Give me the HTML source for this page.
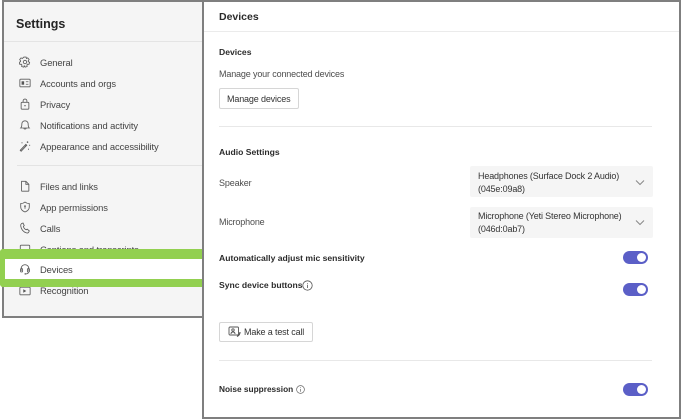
<!DOCTYPE html>
<html><head><meta charset="utf-8">
<style>
html,body{margin:0;padding:0;background:#fff}
body{width:681px;height:419px;position:relative;overflow:hidden;font-family:"Liberation Sans",sans-serif;color:#333}
#w{position:absolute;left:0;top:0;width:681px;height:419px;filter:blur(.3px)}
.a{position:absolute}
.t{position:absolute;white-space:nowrap;font-size:9px;letter-spacing:-.15px;line-height:12px;color:#424242}
.b{font-weight:bold;color:#2b2b2b;font-size:8.6px;letter-spacing:0}
.nav{left:40px;color:#444;font-size:9.4px;letter-spacing:-.1px}
svg.i{position:absolute;left:19px;width:12px;height:12px;margin-top:1px;fill:none;stroke:#5c5c5c;stroke-width:1}
.tog{position:absolute;left:623px;width:25px;height:13px;border-radius:7px;background:#5b5fc7}
.tog:after{content:"";position:absolute;right:2px;top:2px;width:9px;height:9px;border-radius:50%;background:#fff}
.sel{position:absolute;left:470px;width:183px;height:31px;background:#f5f5f5;border-radius:2px}
.btn{position:absolute;border:1px solid #d6d6d6;border-radius:2px;background:#fff;box-sizing:border-box}
</style></head><body><div id="w">

<!-- left panel -->
<div class="a" style="left:2px;top:0;width:201px;height:318px;box-sizing:border-box;border:2px solid #7f7f7f;border-width:2px 0 2px 2px;background:#f5f5f5"></div>
<div class="a" style="left:4px;top:2px;width:199px;height:39px;background:#f5f5f5;border-bottom:1px solid #e4e4e4"></div>
<div class="t" style="left:16px;top:17px;font-size:12.5px;letter-spacing:0;line-height:15px;font-weight:bold;color:#242424">Settings</div>

<svg class="i" style="top:55px" viewBox="0 0 14 14"><path d="M5.700 1.200h2.600l.4 1.700 1.500-.7 1.600 1.900-1 1.400v1l1.600.9-.7 2.300-1.700-.1-.8.900.3 1.700-2.300.8-1-1.400H6.400l-1 1.400-2.300-.8.3-1.700-.8-.9-1.700.1-.7-2.300 1.600-.9v-1l-1-1.400 1.600-1.900 1.500.7z"/><circle cx="7" cy="7" r="2"/></svg>
<div class="t nav" style="top:57px">General</div>

<svg class="i" style="top:76px" viewBox="0 0 14 14"><rect x="1" y="2.500" width="12" height="9" rx="1"/><rect x="3" y="5" width="3" height="4" fill="#555" stroke="none"/><path d="M8 5.500h3M8 8.500h3" stroke-width=".9"/></svg>
<div class="t nav" style="top:78px">Accounts and orgs</div>

<svg class="i" style="top:97px" viewBox="0 0 14 14"><rect x="2.500" y="5" width="9" height="8" rx="1"/><path d="M4.800 5V3.400a2.200 2.200 0 0 1 4.400 0V5"/><circle cx="7" cy="9" r=".8" fill="#555" stroke="none"/></svg>
<div class="t nav" style="top:99px">Privacy</div>

<svg class="i" style="top:118px" viewBox="0 0 14 14"><path d="M2 10.500c1-1 1.300-1.700 1.300-3.500V5.800a3.700 3.700 0 0 1 7.400 0V7c0 1.800.3 2.500 1.300 3.500z"/><path d="M5.500 10.700a1.600 1.600 0 0 0 3 0"/></svg>
<div class="t nav" style="top:120px">Notifications and activity</div>

<svg class="i" style="top:139px" viewBox="0 0 14 14"><path d="M1.500 12l1 1 6.500-6.800-1-1zM7 6.500l1 1" stroke-width="1.100"/><path d="M10 1.500v2M9 2.500h2M12.500 5.500v1.500M3.500 2.500v1.500M11 10v1.500" stroke-width=".9"/></svg>
<div class="t nav" style="top:141px">Appearance and accessibility</div>

<div class="a" style="left:17px;top:165px;width:186px;height:1px;background:#e3e3e3"></div>

<svg class="i" style="top:179px" viewBox="0 0 14 14"><path d="M3 1.500h5l3.500 3.500v7.500a.6.600 0 0 1-.6.600H3.600a.6.600 0 0 1-.6-.6z"/><path d="M8 1.500V5h3.500"/></svg>
<div class="t nav" style="top:181px">Files and links</div>

<svg class="i" style="top:200px" viewBox="0 0 14 14"><path d="M7 1.200c1.500 1.200 3.200 1.800 5 1.800v4c0 3-2.200 4.800-5 5.800-2.800-1-5-2.800-5-5.800V3c1.800 0 3.500-.6 5-1.800z"/><circle cx="7" cy="6" r="1" fill="#555" stroke="none"/><path d="M7 6v3"/></svg>
<div class="t nav" style="top:202px">App permissions</div>

<svg class="i" style="top:221px" viewBox="0 0 14 14"><path d="M3 1.800l1.700-.6 1.400 2.900-1 1.100c.4 1.500 1.700 3.100 3.200 3.900l1.300-.7 2.400 2-.8 1.600c-.5.800-1.500 1-2.500.7C5 11.600 2.600 8.500 2 4.600c-.1-1.100.2-2.200 1-2.800z"/></svg>
<div class="t nav" style="top:223px">Calls</div>

<svg class="i" style="top:242px" viewBox="0 0 14 14"><rect x="1.500" y="2.500" width="11" height="9" rx="1"/></svg>
<div class="t nav" style="top:244px">Captions and transcripts</div>

<svg class="i" style="top:284px" viewBox="0 0 14 14"><rect x="1" y="2.500" width="12" height="9" rx="1"/><path d="M5 5v4l3.500-2z" fill="#555" stroke="none"/></svg>
<div class="t nav" style="top:285px">Recognition</div>

<!-- green highlight -->
<div class="a" style="left:0;top:249px;width:202px;height:38px;box-sizing:border-box;background:#fff;border:solid #92d050;border-width:10px 0 8px 5px;border-radius:3px 0 0 3px"></div>
<svg class="i" style="top:262px" viewBox="0 0 14 14"><path d="M2.500 9.500V6.500a4.500 4.500 0 0 1 9 0v3"/><rect x="1.800" y="6.500" width="2.400" height="4" rx="1"/><rect x="9.800" y="6.500" width="2.400" height="4" rx="1"/><path d="M11 10.500c0 1.500-1.500 2.200-3 2.200"/><circle cx="7.300" cy="12.700" r=".9" fill="#555" stroke="none"/></svg>
<div class="t nav" style="top:264px">Devices</div>

<!-- right panel -->
<div class="a" style="left:202px;top:0;width:479px;height:419px;box-sizing:border-box;border:2px solid #7f7f7f;background:#fff"></div>
<div class="a" style="left:204px;top:31px;width:475px;height:1px;background:#ebebeb"></div>
<div class="t" style="left:219px;top:10px;font-size:10.5px;letter-spacing:0;line-height:14px;font-weight:bold;color:#2b2b2b">Devices</div>

<div class="t b" style="left:219px;top:46px">Devices</div>
<div class="t" style="left:219px;top:68px;color:#4d4d4d">Manage your connected devices</div>
<div class="btn" style="left:219px;top:88px;width:80px;height:21px"></div>
<div class="t" style="left:227px;top:93px;color:#333">Manage devices</div>
<div class="a" style="left:219px;top:126px;width:433px;height:1px;background:#e8e8e8"></div>

<div class="t b" style="left:219px;top:146px">Audio Settings</div>
<div class="t" style="left:219px;top:177px;color:#4d4d4d">Speaker</div>
<div class="t" style="left:219px;top:216px;color:#4d4d4d">Microphone</div>

<div class="sel" style="top:166px"></div>
<div class="t" style="left:478px;top:170px;color:#333">Headphones (Surface Dock 2 Audio)</div>
<div class="t" style="left:478px;top:183px;color:#333">(045e:09a8)</div>
<svg class="a" style="left:635px;top:179px" width="10" height="7" viewBox="0 0 10 7" fill="none" stroke="#888"><path d="M1 1.500l4 4 4-4"/></svg>

<div class="sel" style="top:207px"></div>
<div class="t" style="left:478px;top:210px;color:#333">Microphone (Yeti Stereo Microphone)</div>
<div class="t" style="left:478px;top:223px;color:#333">(046d:0ab7)</div>
<svg class="a" style="left:635px;top:219px" width="10" height="7" viewBox="0 0 10 7" fill="none" stroke="#888"><path d="M1 1.500l4 4 4-4"/></svg>

<div class="t b" style="left:219px;top:252px">Automatically adjust mic sensitivity</div>
<div class="tog" style="top:251px"></div>

<div class="t b" style="left:219px;top:279px">Sync device buttons</div>
<svg class="a" style="left:302px;top:280px" width="11" height="11" viewBox="0 0 11 11" fill="none" stroke="#555" stroke-width=".8"><circle cx="5.500" cy="5.500" r="4.700"/><path d="M5.500 4.800v3.200M5.500 3v.8"/></svg>
<div class="tog" style="top:283px"></div>

<div class="btn" style="left:219px;top:322px;width:94px;height:20px"></div>
<svg class="a" style="left:228px;top:326px" width="13" height="12" viewBox="0 0 13 12" fill="none" stroke="#555" stroke-width=".9"><rect x="1" y="1" width="9.500" height="8" rx="1"/><circle cx="5" cy="4" r="1.200"/><path d="M3 8c0-1.500 1-2 2-2s2 .5 2 2"/><path d="M12 6c0 2-1 3.500-3 4.500" stroke-width="1.200"/></svg>
<div class="t" style="left:244px;top:326px;color:#333">Make a test call</div>

<div class="a" style="left:219px;top:360px;width:433px;height:1px;background:#e8e8e8"></div>

<div class="t b" style="left:219px;top:383px;font-size:8.3px">Noise suppression</div>
<svg class="a" style="left:296px;top:385px" width="9" height="9" viewBox="0 0 9 9" fill="none" stroke="#666" stroke-width=".7"><circle cx="4.500" cy="4.500" r="3.900"/><path d="M4.500 4v2.700M4.500 2.300v.8"/></svg>
<div class="tog" style="top:383px"></div>

</div></body></html>
